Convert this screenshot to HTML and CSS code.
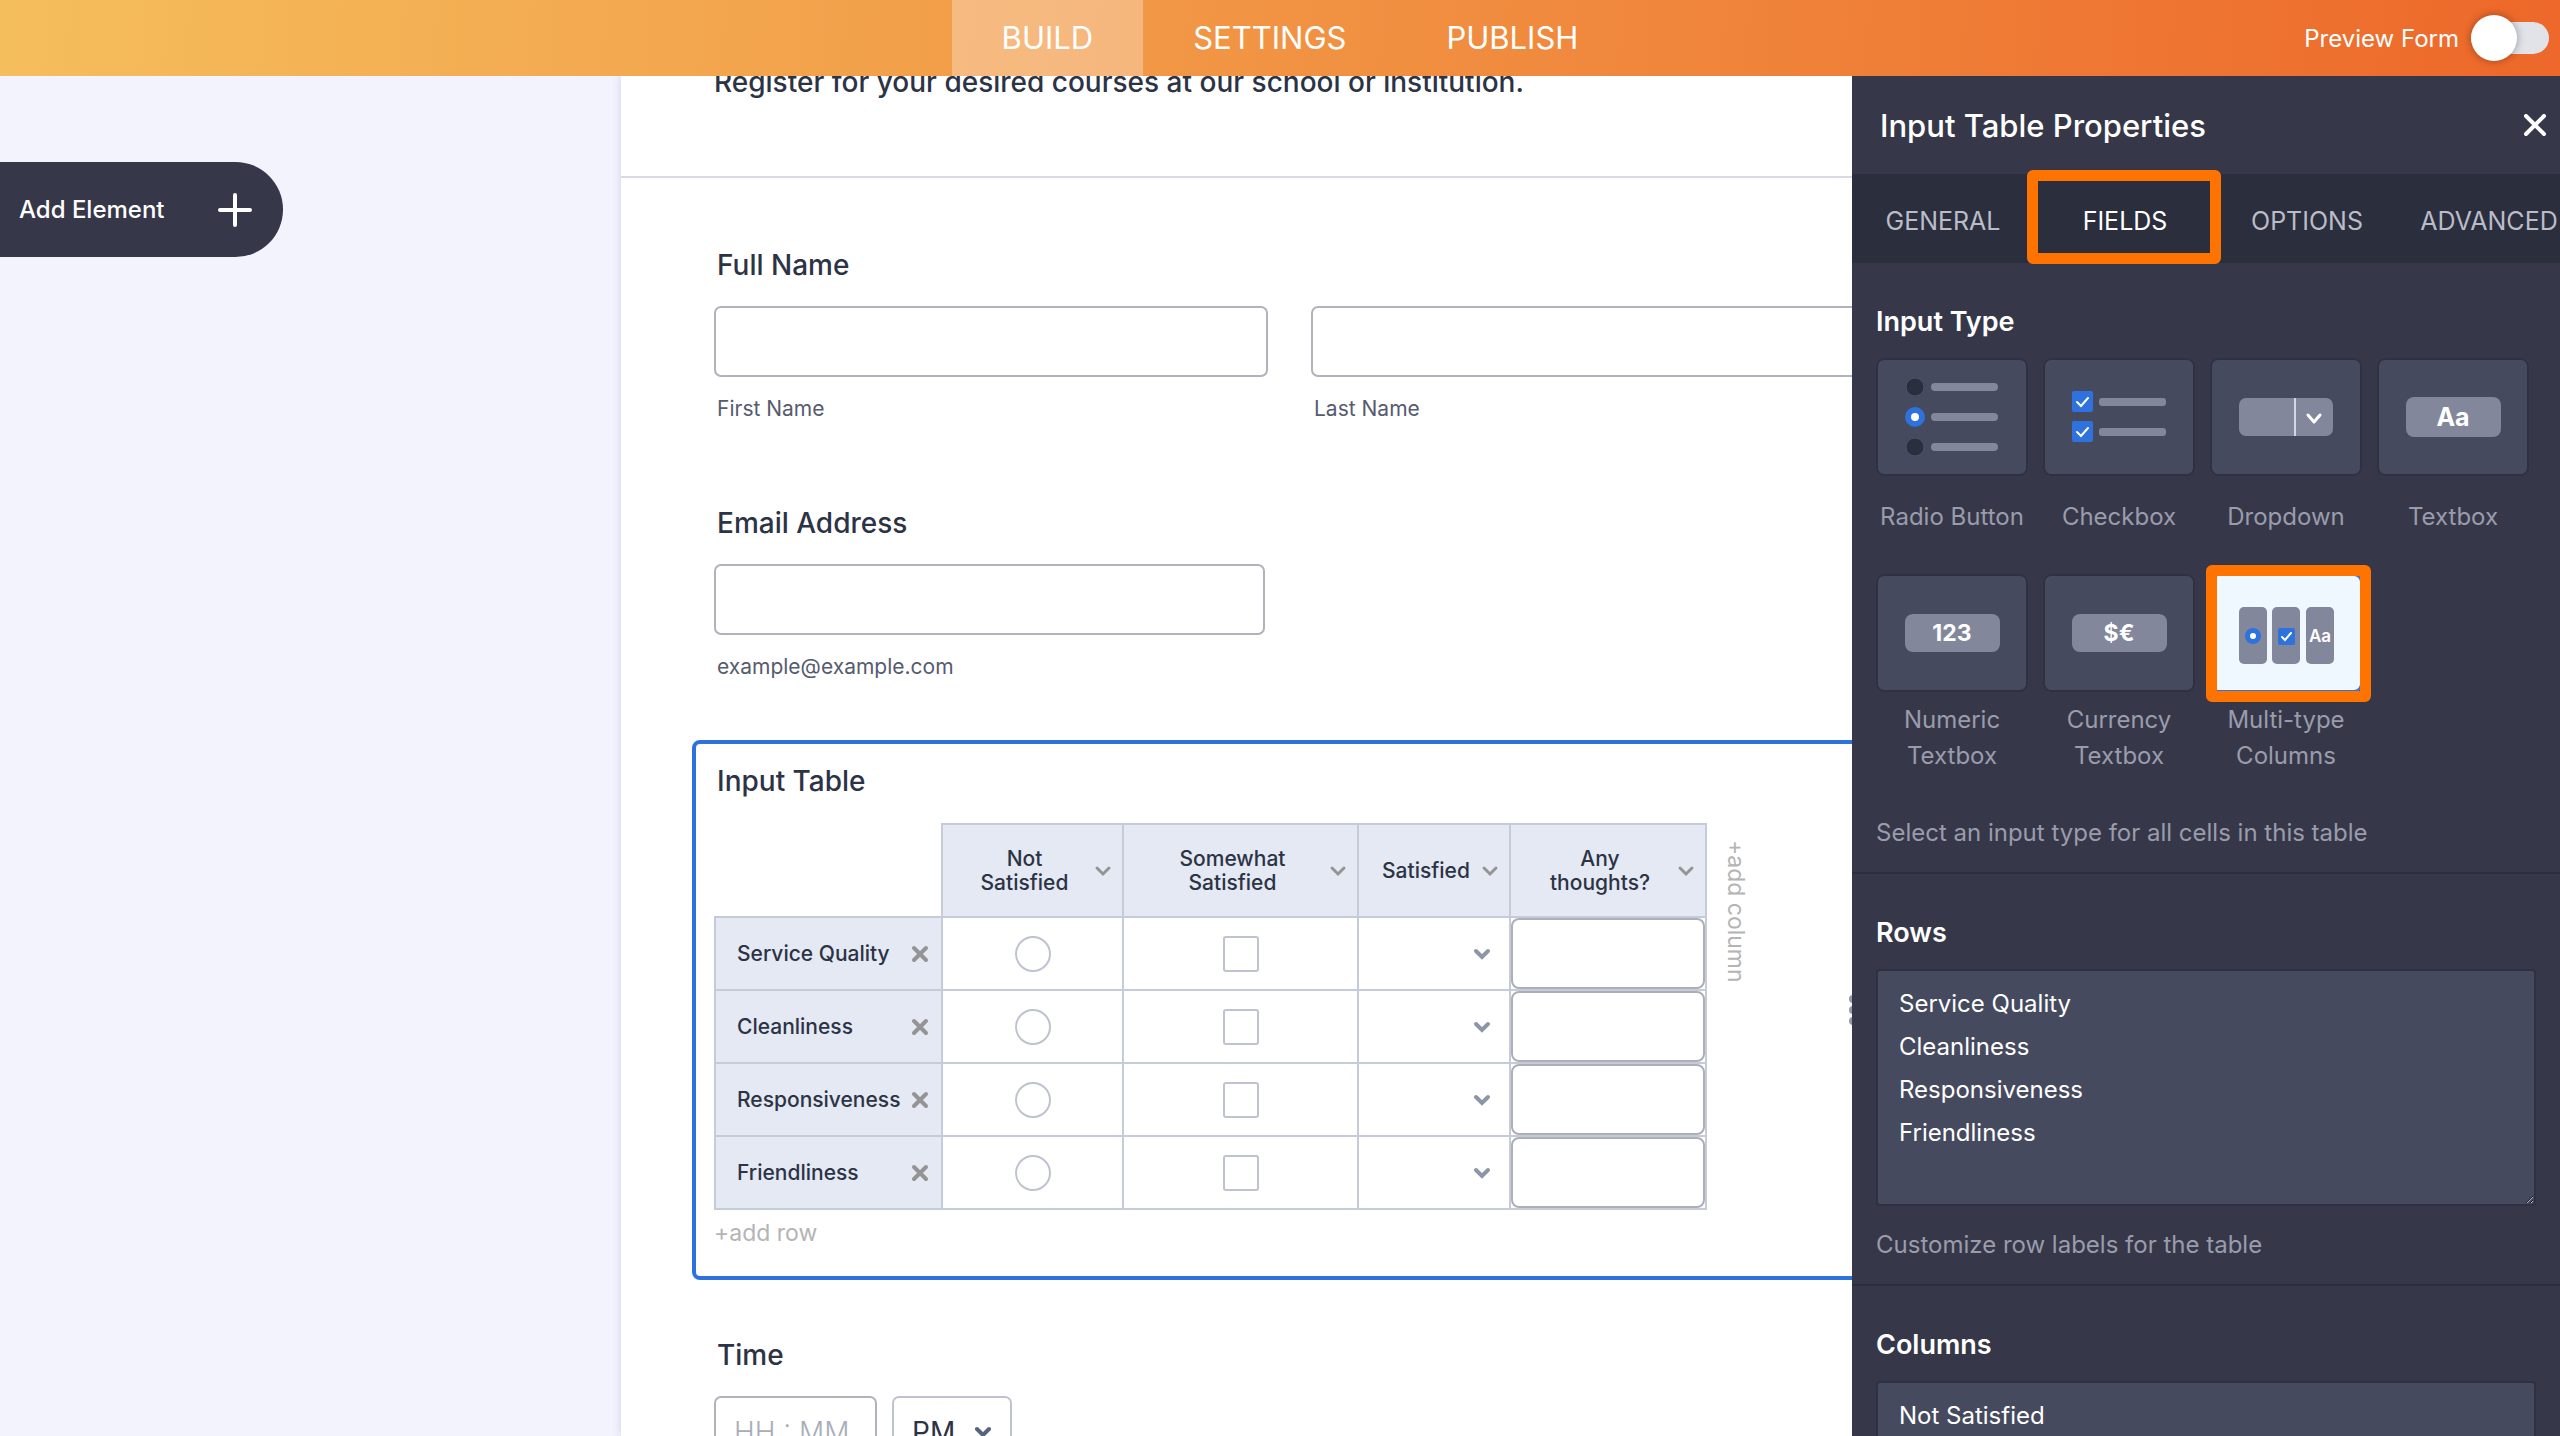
FILE: index.html
```html
<!DOCTYPE html>
<html lang="en">
  <head>
    <meta charset="UTF-8" />
    <meta
      name="viewport"
      content="width=device-width, initial-scale=1.0" />
    <link rel="stylesheet" href="styles.css">
    <title>Form Builder</title>
  </head>
  <body>
    <header class="topbar">
      <nav class="topnav">
        <a class="active" href="#build">BUILD</a>
        <a href="#settings">SETTINGS</a>
        <a href="#publish">PUBLISH</a>
      </nav>
      <label class="preview">
        Preview Form
        <input type="checkbox" class="toggle" />
      </label>
    </header>

    <div class="workspace">
      <div class="rail">
        <button class="add-element">
          Add Element
          <svg width="34" height="34" viewBox="0 0 34 34">
            <path d="M17 2v30M2 17h30" stroke="#fff" stroke-width="4" stroke-linecap="round" />
          </svg>
        </button>
      </div>

      <main class="form-page">
        <div class="form-header">
          <p>Register for your desired courses at our school or institution.</p>
        </div>
        <form class="form-body">
          <fieldset class="field">
            <legend class="title">Full Name</legend>
            <div class="name-row">
              <div>
                <input type="text" class="box" id="first" />
                <label class="sub" for="first">First Name</label>
              </div>
              <div>
                <input type="text" class="box" id="last" />
                <label class="sub" for="last">Last Name</label>
              </div>
            </div>
          </fieldset>

          <div class="field">
            <label class="title" for="email">Email Address</label>
            <input type="email" class="box email" id="email" />
            <span class="sub">example@example.com</span>
          </div>

          <section class="selected">
            <h2 class="title">Input Table</h2>
            <div class="table-row">
              <table>
                <colgroup>
                  <col class="c-label" />
                  <col class="c-not" />
                  <col class="c-some" />
                  <col class="c-sat" />
                  <col class="c-any" />
                </colgroup>
                <thead>
                  <tr>
                    <td class="corner"></td>
                    <th><div class="col-head"><span>Not<br />Satisfied</span><button type="button" class="chev" aria-label="Column menu"></button></div></th>
                    <th><div class="col-head"><span>Somewhat<br />Satisfied</span><button type="button" class="chev" aria-label="Column menu"></button></div></th>
                    <th><div class="col-head"><span>Satisfied</span><button type="button" class="chev" aria-label="Column menu"></button></div></th>
                    <th><div class="col-head"><span>Any<br />thoughts?</span><button type="button" class="chev" aria-label="Column menu"></button></div></th>
                  </tr>
                </thead>
                <tbody>
                  <tr>
                    <th><div class="row-head">Service Quality<button type="button" class="remove" aria-label="Remove row"></button></div></th>
                    <td><input type="radio" name="not" aria-label="Service Quality" /></td>
                    <td><input type="checkbox" aria-label="Service Quality" /></td>
                    <td><select aria-label="Service Quality"><option></option></select></td>
                    <td class="cell-text"><input type="text" aria-label="Service Quality" /></td>
                  </tr>
                  <tr>
                    <th><div class="row-head">Cleanliness<button type="button" class="remove" aria-label="Remove row"></button></div></th>
                    <td><input type="radio" name="not" aria-label="Cleanliness" /></td>
                    <td><input type="checkbox" aria-label="Cleanliness" /></td>
                    <td><select aria-label="Cleanliness"><option></option></select></td>
                    <td class="cell-text"><input type="text" aria-label="Cleanliness" /></td>
                  </tr>
                  <tr>
                    <th><div class="row-head">Responsiveness<button type="button" class="remove" aria-label="Remove row"></button></div></th>
                    <td><input type="radio" name="not" aria-label="Responsiveness" /></td>
                    <td><input type="checkbox" aria-label="Responsiveness" /></td>
                    <td><select aria-label="Responsiveness"><option></option></select></td>
                    <td class="cell-text"><input type="text" aria-label="Responsiveness" /></td>
                  </tr>
                  <tr>
                    <th><div class="row-head">Friendliness<button type="button" class="remove" aria-label="Remove row"></button></div></th>
                    <td><input type="radio" name="not" aria-label="Friendliness" /></td>
                    <td><input type="checkbox" aria-label="Friendliness" /></td>
                    <td><select aria-label="Friendliness"><option></option></select></td>
                    <td class="cell-text"><input type="text" aria-label="Friendliness" /></td>
                  </tr>
                </tbody>
              </table>
              <button type="button" class="add add-column">+add column</button>
            </div>
            <button type="button" class="add">+add row</button>
            <svg class="drag" width="20" height="30" viewBox="0 0 20 30" fill="#9599ab">
              <circle cx="4" cy="4" r="4" />
              <circle cx="4" cy="15" r="4" />
              <circle cx="4" cy="26" r="4" />
              <circle cx="15" cy="4" r="4" />
              <circle cx="15" cy="15" r="4" />
              <circle cx="15" cy="26" r="4" />
            </svg>
          </section>

          <div class="field">
            <label class="title" for="time">Time</label>
            <div class="time-row">
              <input type="text" class="box time" id="time" placeholder="HH : MM" />
              <select class="box ampm" aria-label="AM/PM">
                <option>PM</option>
                <option>AM</option>
              </select>
            </div>
          </div>
        </form>
      </main>

      <aside class="panel">
        <div class="panel-head">
          <h1>Input Table Properties</h1>
          <button class="close" aria-label="Close">
            <svg width="22" height="22" viewBox="0 0 22 22">
              <path d="M2 2l18 18M20 2L2 20" stroke="#fff" stroke-width="4" stroke-linecap="round" />
            </svg>
          </button>
        </div>
        <nav class="tabs">
          <a href="#general">GENERAL</a>
          <a class="active" href="#fields">FIELDS</a>
          <a href="#options">OPTIONS</a>
          <a href="#advanced">ADVANCED</a>
        </nav>

        <section class="prop">
          <h2>Input Type</h2>
          <div class="types">
            <button class="type">
              <span class="card">
                <svg width="152" height="118" viewBox="0 0 152 118">
                  <g fill="#83879b">
                    <rect x="55" y="25" width="67" height="8" rx="4" />
                    <rect x="55" y="55" width="67" height="8" rx="4" />
                    <rect x="55" y="85" width="67" height="8" rx="4" />
                  </g>
                  <circle cx="39" cy="29" r="9" fill="#2b2e3c" stroke="#4c516c" stroke-width="1" />
                  <circle cx="39" cy="59" r="10" fill="#2e72de" />
                  <circle cx="39" cy="59" r="4" fill="#fff" />
                  <circle cx="39" cy="89" r="9" fill="#2b2e3c" stroke="#4c516c" stroke-width="1" />
                </svg>
              </span>
              <span class="type-name">Radio Button</span>
            </button>
            <button class="type">
              <span class="card">
                <svg width="152" height="118" viewBox="0 0 152 118">
                  <g fill="#83879b">
                    <rect x="56" y="40" width="67" height="8" rx="3" />
                    <rect x="56" y="70" width="67" height="8" rx="3" />
                  </g>
                  <g fill="#2e72de">
                    <rect x="29" y="33" width="21" height="21" rx="2" />
                    <rect x="29" y="63" width="21" height="21" rx="2" />
                  </g>
                  <path d="M34 44l4 4 7-8M34 74l4 4 7-8" fill="none" stroke="#fff" stroke-width="2" stroke-linecap="round" />
                </svg>
              </span>
              <span class="type-name">Checkbox</span>
            </button>
            <button class="type">
              <span class="card">
                <svg width="152" height="118" viewBox="0 0 152 118">
                  <rect x="29" y="40" width="94" height="38" rx="7" fill="#83879b" />
                  <path d="M85 40v38" stroke="#d5d7de" stroke-width="2" />
                  <path d="M98 57l6 7 6-7" fill="none" stroke="#fff" stroke-width="3" stroke-linecap="round" stroke-linejoin="round" />
                </svg>
              </span>
              <span class="type-name">Dropdown</span>
            </button>
            <button class="type">
              <span class="card"><span class="chip">Aa</span></span>
              <span class="type-name">Textbox</span>
            </button>
            <button class="type">
              <span class="card"><span class="chip small">123</span></span>
              <span class="type-name">Numeric Textbox</span>
            </button>
            <button class="type">
              <span class="card"><span class="chip small">$€</span></span>
              <span class="type-name">Currency Textbox</span>
            </button>
            <button class="type picked">
              <span class="card">
                <svg width="152" height="118" viewBox="0 0 152 118">
                  <g fill="#83879b">
                    <rect x="29" y="33" width="28" height="57" rx="5" />
                    <rect x="62" y="33" width="28" height="57" rx="5" />
                    <rect x="96" y="33" width="28" height="57" rx="5" />
                  </g>
                  <circle cx="43" cy="62" r="8" fill="#2e72de" />
                  <circle cx="43" cy="62" r="3" fill="#fff" />
                  <rect x="68" y="54" width="17" height="17" rx="2" fill="#2e72de" />
                  <path d="M72 63l3 3 6-7" fill="none" stroke="#fff" stroke-width="2" stroke-linecap="round" />
                  <text class="mini" x="110" y="68" text-anchor="middle">Aa</text>
                </svg>
              </span>
              <span class="type-name">Multi-type Columns</span>
            </button>
          </div>
          <p class="hint">Select an input type for all cells in this table</p>
        </section>

        <section class="prop">
          <h2><label for="rows">Rows</label></h2>
          <textarea id="rows">Service Quality
Cleanliness
Responsiveness
Friendliness</textarea>
          <p class="hint">Customize row labels for the table</p>
        </section>

        <section class="prop">
          <h2><label for="columns">Columns</label></h2>
          <textarea id="columns">Not Satisfied
Somewhat Satisfied
Satisfied
Any thoughts?</textarea>
        </section>
      </aside>
    </div>
  </body>
</html>
```
FILE: styles.css
```css
* {
  margin: 0;
  padding: 0;
  box-sizing: border-box;
  font-family: Inter, "Liberation Sans", sans-serif;
}
body {
  height: 100vh;
  display: flex;
  flex-flow: column;
  overflow: hidden;
  color: #2c3345;
}
button {
  background: none;
  border: none;
  cursor: pointer;
}
a {
  text-decoration: none;
}

/* top bar */
.topbar {
  position: relative;
  z-index: 2;
  height: 76px;
  flex: none;
  display: grid;
  grid-template-columns: 1fr auto 1fr;
  background: linear-gradient(95deg, #f5be5c, #ed682a);
}
.topnav {
  grid-column: 2;
  display: flex;
  margin-left: 20px;
}
.topnav a {
  display: flex;
  align-items: center;
  padding: 0 50px 2px;
  color: white;
  font-size: 31px;
  height: 76px;
}
.topnav .active {
  background: rgba(255, 255, 255, 0.3);
}
.preview {
  display: flex;
  align-items: center;
  justify-content: flex-end;
  gap: 12px;
  padding-right: 11px;
  color: white;
  font-size: 24px;
}
.toggle {
  appearance: none;
  width: 78px;
  height: 32px;
  border-radius: 16px;
  background: #e2e3e9;
  display: flex;
  align-items: center;
}
.toggle::before {
  content: "";
  width: 46px;
  height: 46px;
  flex: none;
  border-radius: 50%;
  background: white;
  box-shadow: 0 0 8px rgba(0, 0, 0, 0.35);
}

.workspace {
  flex: 1;
  min-height: 0;
  display: flex;
}

/* left side */
.rail {
  flex: none;
  width: 621px;
  padding-top: 86px;
  background: #f3f3fe;
}
.add-element {
  display: flex;
  align-items: center;
  justify-content: space-between;
  width: 283px;
  height: 95px;
  padding: 0 31px 0 19px;
  border-radius: 0 48px 48px 0;
  background: #363849;
  color: white;
  font-size: 24px;
  font-weight: 500;
}

/* form */
.form-page {
  flex: 1;
  min-width: 0;
  overflow: hidden;
  background: white;
  box-shadow: 0 0 8px rgba(120, 120, 180, 0.3);
}
.form-header {
  display: flow-root;
  height: 102px;
  padding-left: 93px;
  border-bottom: 2px solid #d9dae3;
}
.form-header p {
  margin-top: -12px;
  font-size: 28px;
  font-weight: 500;
  line-height: 36px;
  white-space: nowrap;
}
.form-body {
  width: 1151px;
  margin-left: 93px;
  padding-top: 69px;
}
.field {
  border: none;
  margin-bottom: 82px;
}
.title {
  display: block;
  margin-bottom: 23px;
  padding-left: 3px;
  font-size: 28px;
  font-weight: 500;
  line-height: 36px;
}
.name-row {
  display: grid;
  grid-template-columns: 1fr 1fr;
  gap: 43px;
}
.box {
  display: block;
  width: 100%;
  height: 71px;
  padding: 0 18px;
  border: 2px solid #b1b2bb;
  border-radius: 7px;
  background: white;
  color: #2c3345;
  font-size: 28px;
}
.email {
  width: 551px;
}
.sub {
  display: block;
  margin-top: 18px;
  padding-left: 3px;
  color: #565b70;
  font-size: 21px;
  line-height: 28px;
}
.selected {
  position: relative;
  margin: -23px -22px 57px;
  padding: 19px 18px 25px;
  border: 4px solid #2e72de;
  border-radius: 8px;
}
.selected .title {
  margin-bottom: 24px;
}
.table-row {
  display: flex;
  gap: 19px;
}
table {
  width: 993px;
  flex: none;
  table-layout: fixed;
  border-collapse: collapse;
}
.c-label {
  width: 227px;
}
.c-not {
  width: 181px;
}
.c-some {
  width: 235px;
}
.c-sat {
  width: 152px;
}
.c-any {
  width: 196px;
}
th,
td {
  height: 73px;
  border: 2px solid #c6cbd9;
  text-align: center;
  vertical-align: middle;
}
th {
  background: #e4e9f3;
  font-size: 21px;
  font-weight: 500;
  line-height: 24px;
}
thead th {
  height: 93px;
}
.corner {
  border-top: none;
  border-left: none;
}
.col-head {
  display: flex;
  align-items: center;
  padding: 0 10px 0 12px;
}
.col-head span {
  flex: 1;
}
.row-head {
  display: flex;
  align-items: center;
  justify-content: space-between;
  padding: 0 12px 0 21px;
}
.chev {
  width: 18px;
  height: 12px;
  background: url("data:image/svg+xml,%3Csvg xmlns='http://www.w3.org/2000/svg' viewBox='0 0 18 12'%3E%3Cpath d='M3 3l6 6 6-6' fill='none' stroke='%23949494' stroke-width='3' stroke-linecap='round'/%3E%3C/svg%3E");
}
.remove {
  width: 18px;
  height: 18px;
  background: url("data:image/svg+xml,%3Csvg xmlns='http://www.w3.org/2000/svg' viewBox='0 0 18 18'%3E%3Cpath d='M3 3l12 12M15 3L3 15' stroke='%23949494' stroke-width='4' stroke-linecap='round'/%3E%3C/svg%3E");
}
td input[type="radio"],
td input[type="checkbox"] {
  appearance: none;
  display: block;
  width: 36px;
  height: 36px;
  margin: 0 auto;
  border: 2px solid #bfc3d0;
  border-radius: 3px;
  background: white;
}
td input[type="radio"] {
  border-radius: 50%;
}
td select,
.ampm {
  appearance: none;
  background: white url("data:image/svg+xml,%3Csvg xmlns='http://www.w3.org/2000/svg' width='18' height='14' viewBox='0 0 18 14'%3E%3Cpath d='M3 4l6 6 6-6' fill='none' stroke='%238d95a9' stroke-width='4' stroke-linecap='round'/%3E%3C/svg%3E") no-repeat right 18px center;
}
td select {
  display: block;
  width: 100%;
  height: 70px;
  border: none;
}
.cell-text input {
  display: block;
  width: 100%;
  height: 71px;
  padding: 0 12px;
  border: 2px solid #adafb8;
  border-radius: 8px;
  font-size: 21px;
}
.add {
  margin-top: 5px;
  color: #b4b4b4;
  font-size: 23px;
  line-height: 36px;
}
.add-column {
  align-self: flex-start;
  margin-top: 17px;
  line-height: 20px;
  writing-mode: vertical-rl;
}
.drag {
  position: absolute;
  top: 50%;
  right: 14px;
  margin-top: -15px;
}
.time-row {
  display: flex;
  gap: 15px;
}
.time {
  width: 163px;
}
.time::placeholder {
  color: #a9adb9;
  font-weight: 300;
}
.ampm {
  width: 120px;
  border-color: #bfc3d0;
  background-image: url("data:image/svg+xml,%3Csvg xmlns='http://www.w3.org/2000/svg' width='18' height='14' viewBox='0 0 18 14'%3E%3Cpath d='M3 4l6 6 6-6' fill='none' stroke='%2357647e' stroke-width='4' stroke-linecap='round'/%3E%3C/svg%3E");
}

/* properties panel */
.panel {
  position: relative;
  z-index: 1;
  flex: none;
  width: 708px;
  overflow: hidden;
  background: #363849;
  color: white;
}
.panel-head {
  display: flex;
  align-items: center;
  justify-content: space-between;
  height: 98px;
  padding: 0 14px 0 28px;
}
.panel-head h1 {
  font-size: 31px;
  font-weight: 500;
}
.close {
  display: flex;
}
.tabs {
  display: grid;
  grid-template-columns: repeat(4, 182px);
  height: 89px;
  background: #2b2e3c;
}
.tabs a {
  position: relative;
  display: flex;
  align-items: center;
  justify-content: center;
  padding-top: 4px;
  color: #babcc9;
  font-size: 25px;
}
.tabs .active {
  color: white;
}
.tabs .active::after {
  content: "";
  position: absolute;
  inset: -4px -5px -1px -7px;
  border: 11px solid #ff7300;
  border-radius: 6px;
}
.prop {
  padding: 41px 24px 21px;
  border-bottom: 2px solid #2c2e3d;
}
.prop h2 {
  margin-bottom: 18px;
  font-size: 27px;
  font-weight: 600;
  line-height: 36px;
}
.types {
  display: grid;
  grid-template-columns: repeat(4, 152px);
  gap: 26px 15px;
}
.type {
  color: #9a9cac;
}
.card {
  position: relative;
  display: flex;
  align-items: center;
  justify-content: center;
  height: 118px;
  margin-bottom: 10px;
  border-radius: 8px;
  background: #464a5e;
  box-shadow: inset 0 0 0 2px #2f3140;
}
.type-name {
  display: flex;
  align-items: center;
  justify-content: center;
  min-height: 62px;
  font-size: 24px;
  line-height: 36px;
}
.chip {
  width: 95px;
  border-radius: 8px;
  background: #83879b;
  color: white;
  font-size: 25px;
  font-weight: 700;
  line-height: 40px;
}
.small {
  font-size: 23px;
  line-height: 38px;
}
.mini {
  fill: white;
  font-size: 17px;
  font-weight: 600;
}
.picked .card {
  background: #eff7ff;
  box-shadow: inset 0 0 0 2px #2e72de;
}
.picked .card::after {
  content: "";
  position: absolute;
  inset: -9px -9px -10px -4px;
  border: 11px solid #ff7300;
  border-radius: 6px;
}
.hint {
  margin-top: 21px;
  color: #9a9cac;
  font-size: 24px;
  line-height: 36px;
}
.types + .hint {
  margin-top: 41px;
}
textarea {
  display: block;
  width: 100%;
  height: 237px;
  padding: 11px 21px;
  border: 2px solid #2f3140;
  border-radius: 4px;
  background: #464a5e;
  color: white;
  font-size: 24px;
  line-height: 43px;
  resize: vertical;
}
```
